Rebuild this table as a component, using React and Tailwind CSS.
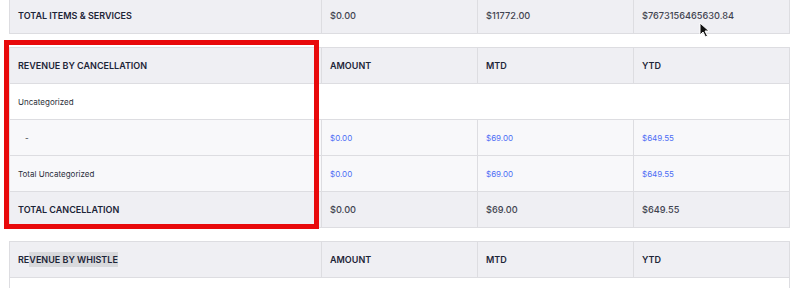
import React from 'react';

const font = { fontFamily: 'Inter, "Noto Sans", sans-serif' };

const Head = ({ label, cols = ['AMOUNT', 'MTD', 'YTD'], selected }) => (
  <tr className="bg-[#efeff3]">
    <td className="h-[36px] border border-[#dddde1] px-2 text-[9px] font-semibold text-[#1c2437]">
      {selected ? (
        <>
          RE<span className="bg-[#d8d9dc] py-[2px]">{label.slice(2)}</span>
        </>
      ) : (
        label
      )}
    </td>
    {cols.map((c) => (
      <td key={c} className="h-[36px] border border-[#dddde1] px-2 text-[9px] font-semibold text-[#1c2437]">
        {c}
      </td>
    ))}
  </tr>
);

const TotalRow = ({ label, values }) => (
  <tr className="bg-[#efeff3]">
    <td className="h-[36px] border border-[#dddde1] px-2 text-[9px] font-semibold text-[#1c2437]">
      {label}
    </td>
    {values.map((v, i) => (
      <td key={i} className="h-[36px] border border-[#dddde1] px-2 text-[9.2px] font-medium text-[#3f4350]">
        {v}
      </td>
    ))}
  </tr>
);

const LinkRow = ({ label, values, indent }) => (
  <tr className="bg-[#f8f8fa]">
    <td className={`h-[36px] border border-[#dddde1] text-[8px] text-[#2b2f3a] ${indent ? 'pl-[15px]' : 'px-2'}`}>
      {label}
    </td>
    {values.map((v, i) => (
      <td key={i} className="h-[36px] border border-[#dddde1] px-2 text-[8px] text-[#4d6df5]">
        {v}
      </td>
    ))}
  </tr>
);

const Cols = () => (
  <colgroup>
    <col className="w-[312px]" />
    <col className="w-[156px]" />
    <col className="w-[156px]" />
    <col className="w-[156px]" />
  </colgroup>
);

export default function App() {
  return (
    <div className="relative h-[288px] w-[793px] overflow-hidden bg-white" style={font}>
      <div className="-mt-[3px] ml-[9px] w-[780px]">
        <table className="w-[780px] table-fixed border-collapse">
          <Cols />
          <tbody>
            <TotalRow label="TOTAL ITEMS & SERVICES" values={['$0.00', '$11772.00', '$7673156465630.84']} />
          </tbody>
        </table>

        <table className="mt-[13px] w-[780px] table-fixed border-collapse">
          <Cols />
          <tbody>
            <Head label="REVENUE BY CANCELLATION" />
            <tr className="bg-white">
              <td className="h-[36px] border-y border-l border-[#dddde1] px-2 text-[8px] text-[#2b2f3a]">Uncategorized</td>
              <td colSpan={3} className="h-[36px] border-y border-r border-[#dddde1]" />
            </tr>
            <LinkRow label="-" indent values={['$0.00', '$69.00', '$649.55']} />
            <LinkRow label="Total Uncategorized" values={['$0.00', '$69.00', '$649.55']} />
            <TotalRow label="TOTAL CANCELLATION" values={['$0.00', '$69.00', '$649.55']} />
          </tbody>
        </table>

        <table className="mt-[13px] w-[780px] table-fixed border-collapse">
          <Cols />
          <tbody>
            <Head label="REVENUE BY WHISTLE" selected />
            <tr className="bg-white">
              <td colSpan={4} className="h-[36px] border border-[#dddde1]" />
            </tr>
          </tbody>
        </table>
      </div>

      {/* highlight box drawn over the table */}
      <div className="pointer-events-none absolute left-[4px] top-[40px] h-[189px] w-[315px] border-[5px] border-[#e8090b]" />

      {/* mouse cursor */}
      <svg className="absolute left-[699px] top-[22px]" width="11" height="16" viewBox="0 0 11 16">
        <path d="M1 1 L1 13 L4 10 L6.5 15 L8.5 14 L6 9 L10 9 Z" fill="#111" stroke="#fff" strokeWidth="1" strokeLinejoin="round" />
      </svg>
    </div>
  );
}
